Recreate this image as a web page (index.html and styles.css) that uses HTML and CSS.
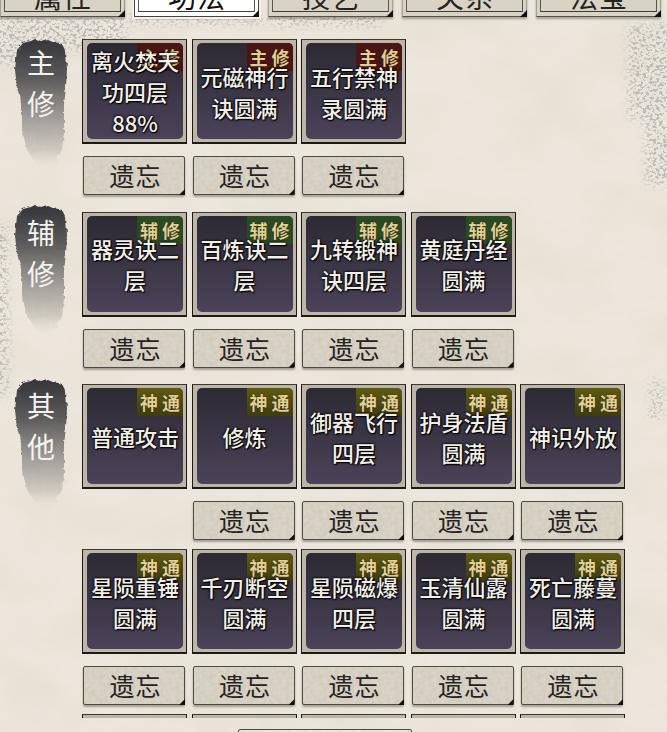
FILE: index.html
```html
<!DOCTYPE html>
<html lang="zh">
<head>
<meta charset="utf-8">
<title>功法</title>
<link rel="stylesheet" href="styles.css">
</head>
<body>
<svg class="defs" width="0" height="0" aria-hidden="true">
  <defs>
    <linearGradient id="inkfade" x1="0" y1="0" x2="0" y2="1">
      <stop offset="0" stop-color="#35353a"/>
      <stop offset=".3" stop-color="#5c5b5b"/>
      <stop offset=".6" stop-color="#a09d98"/>
      <stop offset=".85" stop-color="#cfcac1"/>
      <stop offset="1" stop-color="#e6e0d6" stop-opacity="0"/>
    </linearGradient>
    <filter id="rough" x="-10%" y="-10%" width="120%" height="120%">
      <feTurbulence type="fractalNoise" baseFrequency=".18" numOctaves="2" seed="4"/>
      <feDisplacementMap in="SourceGraphic" scale="4"/>
    </filter>
    <filter id="specks" x="0" y="0" width="100%" height="100%">
      <feTurbulence type="fractalNoise" baseFrequency=".3 .38" numOctaves="3" seed="7" result="n"/>
      <feColorMatrix in="n" type="matrix" values="0 0 0 0 .5  0 0 0 0 .49  0 0 0 0 .47  8 0 0 0 -4" result="m"/>
      <feGaussianBlur in="SourceAlpha" stdDeviation="5" result="soft"/>
      <feComposite in="m" in2="soft" operator="in"/>
    </filter>
    <symbol id="ink" viewBox="0 0 54 134">
      <path fill="url(#inkfade)" filter="url(#rough)" d="M3 12 L9 5 L17 3 L21 1 L27 3 L33 1 L40 4 L48 6 L52 14 L53 30 L52 50 L50 66 L50 95 L48 112 L42 124 L33 132 L22 126 L13 112 L8 92 L8 66 L3 50 L1 32 Z"/>
    </symbol>
  </defs>
</svg>

<main class="page">
  <svg class="wear" width="667" height="732" aria-hidden="true">
    <g filter="url(#specks)">
      <rect x="-10" y="17" width="135" height="34"/>
      <rect x="-10" y="40" width="30" height="24"/>
      <rect x="272" y="12" width="110" height="14"/>
      <rect x="130" y="12" width="135" height="12"/>
      <rect x="628" y="25" width="50" height="95"/>
      <rect x="645" y="110" width="30" height="75"/>
      <rect x="-10" y="225" width="18" height="170"/>
      <rect x="650" y="380" width="12" height="40"/>
    </g>
  </svg>

  <nav class="tabs">
    <div class="tab">属性</div>
    <div class="tab tab-on">功法</div>
    <div class="tab">技艺</div>
    <div class="tab">关系</div>
    <div class="tab">法宝</div>
  </nav>

  <div class="scroller">
    <section class="sec sec-a">
      <div class="label"><svg class="inkblot"><use href="#ink"/></svg><span>主</span><span>修</span></div>
      <div class="grid">
        <div class="card"><div class="inner"><b class="tag tag-main">主修</b><p>离火焚天功四层<br>88%</p></div></div>
        <div class="card"><div class="inner"><b class="tag tag-main">主修</b><p>元磁神行诀圆满</p></div></div>
        <div class="card"><div class="inner"><b class="tag tag-main">主修</b><p>五行禁神录圆满</p></div></div>
        <div class="btn c1">遗忘</div>
        <div class="btn">遗忘</div>
        <div class="btn">遗忘</div>
      </div>
    </section>

    <section class="sec sec-b">
      <div class="label"><svg class="inkblot"><use href="#ink"/></svg><span>辅</span><span>修</span></div>
      <div class="grid">
        <div class="card"><div class="inner"><b class="tag tag-aux">辅修</b><p>器灵诀二层</p></div></div>
        <div class="card"><div class="inner"><b class="tag tag-aux">辅修</b><p>百炼诀二层</p></div></div>
        <div class="card"><div class="inner"><b class="tag tag-aux">辅修</b><p>九转锻神诀四层</p></div></div>
        <div class="card"><div class="inner"><b class="tag tag-aux">辅修</b><p>黄庭丹经圆满</p></div></div>
        <div class="btn c1">遗忘</div>
        <div class="btn">遗忘</div>
        <div class="btn">遗忘</div>
        <div class="btn">遗忘</div>
      </div>
    </section>

    <section class="sec sec-c">
      <div class="label"><svg class="inkblot"><use href="#ink"/></svg><span>其</span><span>他</span></div>
      <div class="grid">
        <div class="card"><div class="inner"><b class="tag tag-god">神通</b><p>普通攻击</p></div></div>
        <div class="card"><div class="inner"><b class="tag tag-god">神通</b><p>修炼</p></div></div>
        <div class="card"><div class="inner"><b class="tag tag-god">神通</b><p>御器飞行四层</p></div></div>
        <div class="card"><div class="inner"><b class="tag tag-god">神通</b><p>护身法盾圆满</p></div></div>
        <div class="card"><div class="inner"><b class="tag tag-god">神通</b><p>神识外放</p></div></div>
        <div class="btn c2">遗忘</div>
        <div class="btn">遗忘</div>
        <div class="btn">遗忘</div>
        <div class="btn">遗忘</div>

        <div class="card"><div class="inner"><b class="tag tag-god">神通</b><p>星陨重锤圆满</p></div></div>
        <div class="card"><div class="inner"><b class="tag tag-god">神通</b><p>千刃断空圆满</p></div></div>
        <div class="card"><div class="inner"><b class="tag tag-god">神通</b><p>星陨磁爆四层</p></div></div>
        <div class="card"><div class="inner"><b class="tag tag-god">神通</b><p>玉清仙露圆满</p></div></div>
        <div class="card"><div class="inner"><b class="tag tag-god">神通</b><p>死亡藤蔓圆满</p></div></div>
        <div class="btn">遗忘</div>
        <div class="btn">遗忘</div>
        <div class="btn">遗忘</div>
        <div class="btn">遗忘</div>
        <div class="btn">遗忘</div>

        <div class="card"><div class="inner"><b class="tag tag-god">神通</b></div></div>
        <div class="card"><div class="inner"><b class="tag tag-god">神通</b></div></div>
        <div class="card"><div class="inner"><b class="tag tag-god">神通</b></div></div>
        <div class="card"><div class="inner"><b class="tag tag-god">神通</b></div></div>
        <div class="card"><div class="inner"><b class="tag tag-god">神通</b></div></div>
      </div>
    </section>
  </div>

  <footer class="foot"><div class="btn foot-btn"></div></footer>
</main>
</body>
</html>
```

FILE: styles.css
```css
* { box-sizing: border-box; }

html, body {
  margin: 0;
  padding: 0;
}

body {
  width: 667px;
  height: 732px;
  overflow: hidden;
  font-family: "Noto Sans CJK SC", "Noto Sans", sans-serif;
}

.defs {
  position: absolute;
}

.page {
  position: relative;
  width: 667px;
  height: 732px;
  overflow: hidden;
  background-color: #ece6dc;
  background-image:
    url("data:image/svg+xml,%3Csvg xmlns='http://www.w3.org/2000/svg' width='667' height='732'%3E%3Cfilter id='n'%3E%3CfeTurbulence type='fractalNoise' baseFrequency='.012 .02' numOctaves='5' seed='3'/%3E%3CfeColorMatrix values='0 0 0 0 .6 0 0 0 0 .54 0 0 0 0 .45 0 0 0 .3 -.1'/%3E%3C/filter%3E%3Crect width='667' height='732' filter='url(%23n)'/%3E%3C/svg%3E");
}

.wear {
  position: absolute;
  left: 0;
  top: 0;
  pointer-events: none;
}

/* top tab strip: the tabs hang above the window, only their feet show */
.tabs {
  position: relative;
  display: flex;
  align-items: flex-end;
  gap: 9px;
  height: 17px;
}

.tab {
  position: relative;
  flex: none;
  width: 125px;
  height: 44px;
  padding: 0 0 4px 1px;
  display: flex;
  align-items: flex-end;
  justify-content: center;
  font-size: 28px;
  line-height: 32px;
  letter-spacing: 1px;
  color: #26241f;
  background: #d9d3c5;
  border: 1px solid #a8a190;
  border-bottom: 1px solid #55524a;
  box-shadow: 0 2px 2px rgba(60, 55, 45, .4);
}

.tab::before {
  content: "";
  position: absolute;
  inset: 3px 3px 4px 3px;
  border: 1px solid #5a564c;
  border-bottom-color: #3f3c34;
}

.tab::after {
  content: "";
  position: absolute;
  right: -1px;
  bottom: -1px;
  width: 7px;
  height: 7px;
  background: #111;
  clip-path: polygon(100% 0, 100% 100%, 0 100%);
}

.tab-on {
  background: #fff;
  border-color: #444;
  color: #111;
  outline: 2px solid #f4f1ea;
}

.scroller {
  position: relative;
  height: 701px;
  padding-top: 22px;
  overflow: hidden;
}

.sec {
  display: flex;
  margin-bottom: 7.5px;
}

.label {
  position: relative;
  flex: none;
  width: 54px;
  height: 132px;
  margin-left: 14px;
  margin-right: 14px;
  display: flex;
  flex-direction: column;
  align-items: center;
  font-size: 28px;
  line-height: 41px;
  color: #f4f2ee;
}

.label span {
  position: relative;
}

.sec-a .label { margin-top: -1px; padding-top: 4px; }
.sec-b .label { margin-top: -8px; padding-top: 8px; }
.sec-c .label { margin-top: -6px; padding-top: 7px; }

.inkblot {
  position: absolute;
  left: 0;
  top: 0;
  width: 54px;
  height: 134px;
}

.grid {
  display: grid;
  grid-template-columns: repeat(5, 105px);
  column-gap: 4.5px;
  align-items: start;
}

.card {
  height: 105px;
  padding: 3px 3px 4px 4px;
  background: #bdb6a8;
  border: 1px solid #8f897c;
  border-right-color: #1c1b18;
  border-bottom: 2px solid #1c1b18;
  border-left-color: #1c1b18;
  border-top-color: #3a3833;
}

.inner {
  position: relative;
  height: 96px;
  display: flex;
  align-items: center;
  justify-content: center;
  border-radius: 5px;
  background: linear-gradient(#2c2a33, #4b4359);
  overflow: hidden;
}

.inner p {
  position: relative;
  width: 92px;
  margin: 1px 0 0;
  text-align: center;
  font-size: 22px;
  font-weight: 500;
  line-height: 31px;
  color: #f2efe9;
  text-shadow: 0 0 3px #000, 1px 1px 1px #000, 0 0 2px #000;
}

.tag {
  position: absolute;
  top: 0;
  right: 0;
  width: 46px;
  height: 28px;
  display: flex;
  align-items: center;
  padding: 0 0 0 3px;
  font-size: 18px;
  line-height: 28px;
  letter-spacing: 4px;
  font-weight: 700;
  color: #e2cf94;
  text-shadow: 0 0 1px #000;
  white-space: nowrap;
  overflow: hidden;
}

.tag-main { background: #4a1613; }
.tag-aux  { background: #2c4a22; }
.tag-god  { background: linear-gradient(#5e5a10, #3e3b12); }

.btn {
  position: relative;
  width: 102px;
  height: 39px;
  margin: 12px 0 9px 1px;
  padding-left: 3px;
  display: flex;
  align-items: center;
  justify-content: center;
  font-size: 25px;
  line-height: 39px;
  letter-spacing: 1px;
  color: #25231f;
  background-color: #dad4c7;
  background-image:
    url("data:image/svg+xml,%3Csvg xmlns='http://www.w3.org/2000/svg' width='120' height='50'%3E%3Cfilter id='n'%3E%3CfeTurbulence type='fractalNoise' baseFrequency='.25' numOctaves='3' seed='2'/%3E%3CfeColorMatrix values='0 0 0 0 .45 0 0 0 0 .41 0 0 0 0 .33 0 0 0 .5 -.15'/%3E%3C/filter%3E%3Crect width='120' height='50' filter='url(%23n)'/%3E%3C/svg%3E");
  border: 1px solid #4c4a44;
  border-radius: 2px;
  box-shadow: 0 2px 2px rgba(60, 55, 45, .4);
}

.btn::after {
  content: "";
  position: absolute;
  right: -1px;
  bottom: -1px;
  width: 6px;
  height: 6px;
  background: #111;
  clip-path: polygon(100% 0, 100% 100%, 0 100%);
}

.c1 { grid-column: 1; }
.c2 { grid-column: 2; }

.foot {
  position: relative;
  display: flex;
  justify-content: center;
  padding-top: 11px;
  padding-right: 17px;
}

.foot-btn {
  width: 174px;
  margin: 0;
  background-color: #f0ebe0;
}
```
